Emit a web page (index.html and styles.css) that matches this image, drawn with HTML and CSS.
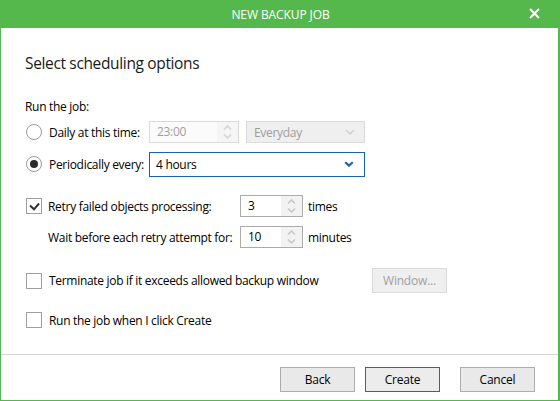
FILE: index.html
```html
<!DOCTYPE html>
<html>
<head>
<meta charset="utf-8">
<link rel="stylesheet" href="styles.css">
</head>
<body>
<div class="window">
  <div class="titlebar">
    <span class="title">NEW BACKUP JOB</span>
    <svg class="close" width="11" height="11" viewBox="0 0 11 11"><path d="M1 1L10 10M10 1L1 10" stroke="#fff" stroke-width="2" fill="none"/></svg>
  </div>
  <div class="panel">
    <div class="content">
      <h1 class="heading">Select scheduling options</h1>
      <div class="section-label">Run the job:</div>

      <div class="radio-row first">
        <span class="radio"></span>
        <span class="rlabel">Daily at this time:</span>
        <div class="spin disabled time">
          <span class="spin-val">23:00</span>
          <span class="spin-btns">
            <svg width="9" height="5" viewBox="0 0 9 5"><polyline points="1,4.5 4.5,1 8,4.5" fill="none" stroke="#d4d4d4" stroke-width="1.5"/></svg>
            <svg width="9" height="5" viewBox="0 0 9 5"><polyline points="1,0.5 4.5,4 8,0.5" fill="none" stroke="#d4d4d4" stroke-width="1.5"/></svg>
          </span>
        </div>
        <div class="combo disabled everyday">
          <span>Everyday</span>
          <svg width="10" height="6" viewBox="0 0 10 6"><polyline points="1,1 5,5 9,1" fill="none" stroke="#d0d0d0" stroke-width="1.4"/></svg>
        </div>
      </div>

      <div class="radio-row second">
        <span class="radio checked"></span>
        <span class="rlabel">Periodically every:</span>
        <div class="combo active period">
          <span>4 hours</span>
          <svg width="10" height="6" viewBox="0 0 10 6"><polyline points="1.2,1.2 5,4.6 8.8,1.2" fill="none" stroke="#1a63b8" stroke-width="2.2"/></svg>
        </div>
      </div>

      <div class="retry-grid">
        <span class="check checked">
          <svg width="11" height="9" viewBox="0 0 11 9"><polyline points="1,3.5 5,7.3 10,1.5" fill="none" stroke="#333" stroke-width="2"/></svg>
        </span>
        <span class="glabel">Retry failed objects processing:</span>
        <div class="spin num">
          <span class="spin-val">3</span>
          <span class="spin-btns">
            <svg width="9" height="5" viewBox="0 0 9 5"><polyline points="1,4.5 4.5,1 8,4.5" fill="none" stroke="#c6c6c6" stroke-width="1.5"/></svg>
            <svg width="9" height="5" viewBox="0 0 9 5"><polyline points="1,0.5 4.5,4 8,0.5" fill="none" stroke="#c6c6c6" stroke-width="1.5"/></svg>
          </span>
        </div>
        <span class="unit">times</span>

        <span></span>
        <span class="glabel">Wait before each retry attempt for:</span>
        <div class="spin num">
          <span class="spin-val">10</span>
          <span class="spin-btns">
            <svg width="9" height="5" viewBox="0 0 9 5"><polyline points="1,4.5 4.5,1 8,4.5" fill="none" stroke="#c6c6c6" stroke-width="1.5"/></svg>
            <svg width="9" height="5" viewBox="0 0 9 5"><polyline points="1,0.5 4.5,4 8,0.5" fill="none" stroke="#c6c6c6" stroke-width="1.5"/></svg>
          </span>
        </div>
        <span class="unit">minutes</span>
      </div>

      <div class="option-row terminate">
        <span class="check"></span>
        <span class="olabel">Terminate job if it exceeds allowed backup window</span>
        <button class="btn disabled-btn">Window...</button>
      </div>

      <div class="option-row runnow">
        <span class="check"></span>
        <span class="olabel">Run the job when I click Create</span>
      </div>
    </div>
    <div class="footer">
      <button class="btn">Back</button>
      <button class="btn primary">Create</button>
      <button class="btn cancel">Cancel</button>
    </div>
  </div>
</div>
</body>
</html>
```

FILE: styles.css
```css
* { box-sizing: border-box; }
html, body {
  margin: 0;
  padding: 0;
  background: #ffffff;
}
body {
  font-family: "Open Sans", "Noto Sans", "Liberation Sans", sans-serif;
  font-size: 12px;
  letter-spacing: -0.3px;
  color: #000;
  white-space: nowrap;
}
.window {
  width: 560px;
  height: 401px;
  display: flex;
  flex-direction: column;
  background: #55b84c;
  padding: 0 2px 1px 1px;
}
.titlebar {
  height: 28px;
  flex: 0 0 28px;
  display: flex;
  align-items: center;
  justify-content: center;
  position: relative;
  color: #fff;
}
.title {
  font-size: 12px;
  letter-spacing: -0.1px;
  margin-left: 2px;
}
.close {
  position: absolute;
  right: 18px;
  top: 8px;
}
.panel {
  flex: 1;
  background: #fff;
  display: flex;
  flex-direction: column;
}
.content {
  flex: 1;
  padding: 0 0 0 24px;
  border-bottom: 1px solid #d4d4d4;
}
.heading {
  margin: 24px 0 0 0;
  font-size: 15.5px;
  letter-spacing: -0.35px;
  font-weight: normal;
  line-height: 22px;
  color: #1a1a1a;
}
.section-label {
  margin-top: 24px;
  line-height: 18px;
}
.radio-row {
  display: flex;
  align-items: center;
  height: 24px;
}
.radio-row.first { margin-top: 4px; }
.radio-row.second { margin-top: 8px; }
.radio {
  width: 16px;
  height: 16px;
  border: 1px solid #9a9a9a;
  border-radius: 50%;
  margin-left: 1px;
  display: flex;
  align-items: center;
  justify-content: center;
  flex: 0 0 16px;
}
.radio.checked::after {
  content: "";
  width: 8px;
  height: 8px;
  border-radius: 50%;
  background: #2b2b2b;
}
.rlabel {
  width: 100px;
  margin-left: 7px;
  flex: 0 0 100px;
}
.spin {
  display: flex;
  height: 22px;
  border: 1px solid #ababab;
  background: #fff;
}
.spin-val {
  flex: 1;
  padding-left: 7px;
  line-height: 20px;
}
.spin-btns {
  width: 21px;
  background: #f2f2f2;
  display: flex;
  flex-direction: column;
  align-items: center;
  justify-content: space-evenly;
}
.spin.time {
  width: 90px;
}
.spin.disabled {
  border-color: #dadada;
  color: #9e9e9e;
  background: #fbfbfb;
}
.spin.disabled .spin-btns { background: #f5f5f5; }
.combo {
  display: flex;
  align-items: center;
  justify-content: space-between;
  height: 22px;
  padding: 0 9px 0 7px;
}
.combo.disabled {
  width: 119px;
  margin-left: 7px;
  background: #efefef;
  border: 1px solid #dadada;
  color: #9e9e9e;
}
.combo.active {
  width: 216px;
  height: 25px;
  border: 1px solid #1f62b5;
  padding: 0 10px 0 6px;
}
.retry-grid {
  display: grid;
  grid-template-columns: 23px 192px 63px auto;
  grid-template-rows: 22px 22px;
  row-gap: 9px;
  align-items: center;
  margin-top: 19px;
}
.check {
  width: 16px;
  height: 16px;
  border: 1px solid #a0a0a0;
  margin-left: 1px;
  display: flex;
  align-items: center;
  justify-content: center;
  background: #fff;
}
.spin.num { width: 63px; }
.unit { margin-left: 5px; }
.option-row {
  display: flex;
  align-items: center;
}
.terminate {
  height: 25px;
  margin-top: 20px;
}
.runnow {
  height: 18px;
  margin-top: 18px;
}
.olabel {
  margin-left: 7px;
  width: 323px;
}
.btn {
  font-family: inherit;
  font-size: 12px;
  letter-spacing: -0.2px;
  width: 75px;
  height: 25px;
  border: 1px solid #adadad;
  background: #e9e9e9;
  color: #000;
  padding: 0;
}
.btn.disabled-btn {
  background: #efefef;
  border-color: #dadada;
  color: #a0a0a0;
}
.btn.primary {
  border-color: #2a66aa;
  background: #ececec;
}
.footer {
  height: 45px;
  flex: 0 0 45px;
  display: flex;
  align-items: flex-start;
  padding: 12px 0 0 279px;
  gap: 10px;
}
.footer .cancel { margin-left: 10px; }
```
